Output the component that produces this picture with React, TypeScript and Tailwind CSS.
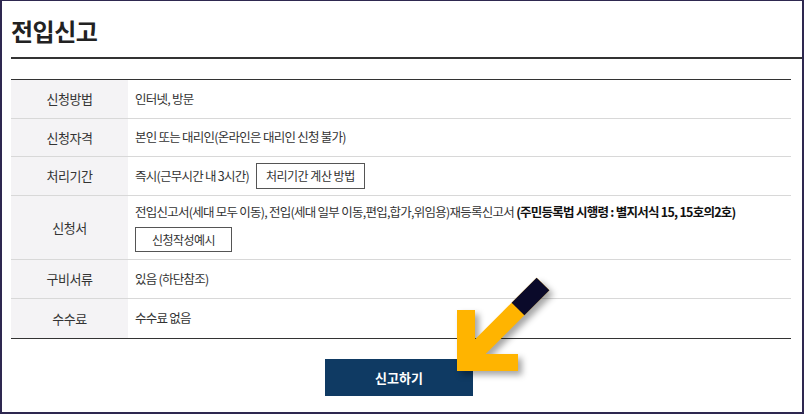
import React from "react";

const rows = [
  { label: "신청방법", h: "h-[39px]", content: <span>인터넷, 방문</span> },
  { label: "신청자격", h: "h-[38px]", content: <span>본인 또는 대리인(온라인은 대리인 신청 불가)</span> },
  {
    label: "처리기간",
    h: "h-[39px]",
    content: (
      <div className="flex items-center gap-[7px]">
        <span>즉시(근무시간 내 3시간)</span>
        <button className="h-[26px] px-[9px] border border-[#555] bg-white text-[12px] text-[#333] tracking-[-0.5px]">
          처리기간 계산 방법
        </button>
      </div>
    ),
  },
  {
    label: "신청서",
    h: "h-[64px]",
    content: (
      <div className="flex flex-col items-start gap-[6px]">
        <span>
          전입신고서(세대 모두 이동), 전입(세대 일부 이동,편입,합가,위임용)재등록신고서{" "}
          <b className="font-bold text-[#111]">(주민등록법 시행령 : 별지서식 15, 15호의2호)</b>
        </span>
        <button className="h-[25px] w-[97px] border border-[#555] bg-white text-[12px] text-[#333] tracking-[-0.5px]">
          신청작성예시
        </button>
      </div>
    ),
  },
  { label: "구비서류", h: "h-[39px]", content: <span>있음 (하단참조)</span> },
  { label: "수수료", h: "h-[39px]", content: <span>수수료 없음</span> },
];

const App = () => {
  return (
    <div
      className="relative w-[804px] h-[414px] bg-white border-t border-l-2 border-r-2 border-b-2 border-[#2e2850] overflow-hidden text-[#333]"
      style={{ fontFamily: '"Noto Sans CJK KR", "Noto Sans", sans-serif' }}
    >
      <div className="pl-[9px]">
        <h1 className="h-[58px] pt-[15px] text-[24px] font-bold leading-[30px] text-[#222] border-b-2 border-[#333] tracking-[-0.5px]">
          전입신고
        </h1>
      </div>

      <div className="mt-[20px] ml-[9px] mr-[11px] border-t border-b border-[#333] text-[13px] tracking-[-0.4px]">
        {rows.map((r, i) => (
          <div
            key={r.label}
            className={`flex ${r.h} ${i < rows.length - 1 ? "border-b border-[#d8d8d8]" : ""}`}
          >
            <div className="w-[117px] shrink-0 bg-[#f4f3f5] flex items-center justify-center">
              {r.label}
            </div>
            <div className="flex-1 flex items-center pl-[7px] text-[12.5px] tracking-[-0.75px]">
              {r.content}
            </div>
          </div>
        ))}
      </div>

      <div className="flex justify-center mt-[20px] pr-[6px]">
        <button className="w-[148px] h-[37px] bg-[#0f3a63] text-white text-[13px] font-bold">
          신고하기
        </button>
      </div>

      <svg
        className="absolute left-0 top-0 pointer-events-none"
        width="804"
        height="414"
        style={{ filter: "drop-shadow(4px 4px 3px rgba(0,0,0,0.35))" }}
      >
        <line x1="468" y1="356" x2="541" y2="283" stroke="#ffb400" strokeWidth="18" />
        <line x1="516" y1="308" x2="541" y2="283" stroke="#0a0a2a" strokeWidth="18" />
        <polygon points="455,309 473,309 473,353 516,353 516,370 455,370" fill="#ffb400" />
      </svg>
    </div>
  );
};

export default App;
